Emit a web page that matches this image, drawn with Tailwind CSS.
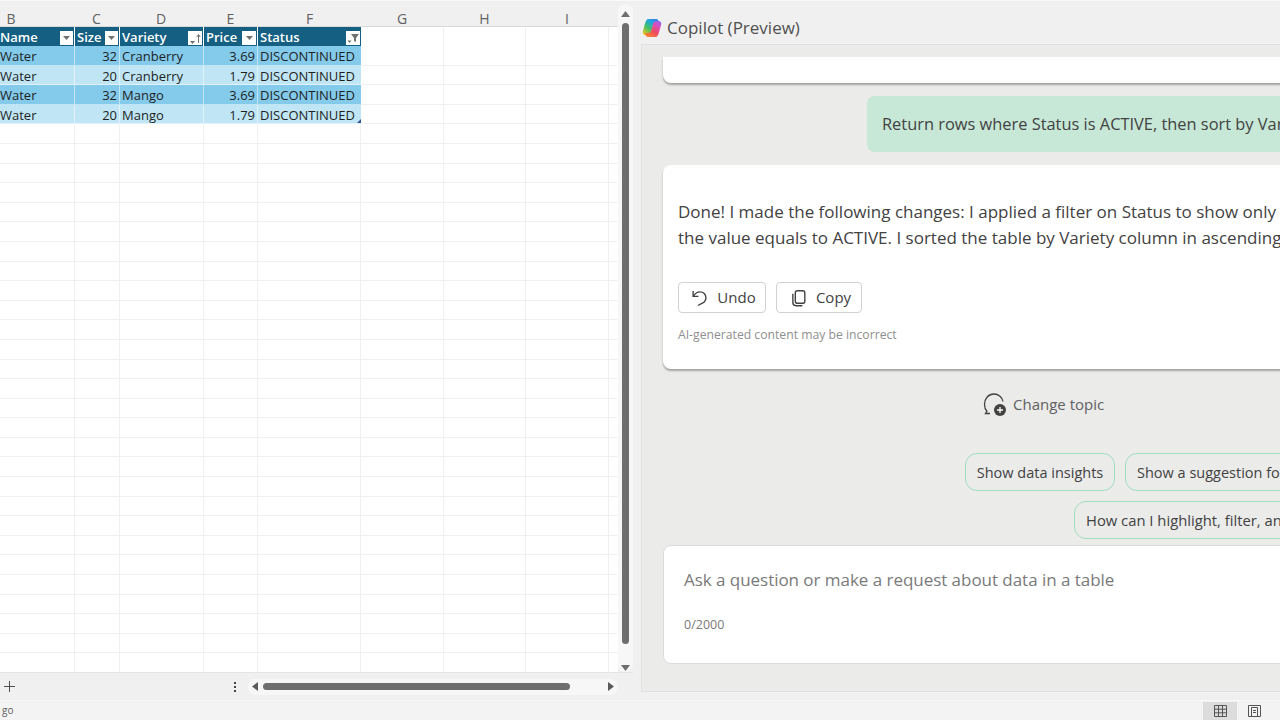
<!DOCTYPE html>
<html lang="en">
<head>
	<meta charset="UTF-8">
	<title>Copilot in Excel</title>
	<script src="https://cdn.jsdelivr.net/npm/@tailwindcss/browser@4"></script>
</head>
<body class="w-[1280px] h-[720px] overflow-hidden bg-[#f3f3f3] font-['Open_Sans',sans-serif] text-[#424242]">

<div class="flex flex-col h-[720px]">
	<div class="flex h-[700px] pt-[2px] bg-[#f0f0f0] border-t border-[#f8f8f8]">

		<!-- sheet -->
		<div class="w-[633px] shrink-0 flex flex-col">
			<div class="flex flex-1 min-h-0">
				<div class="w-[618px] shrink-0 overflow-hidden">
					<div class="grid grid-cols-[126px_45px_84px_55px_103px_82px_83px_82px_10px] -ml-[52px] h-[23px] pt-[5px] items-center text-center text-[14px] text-[#616161]">
						<div>B</div><div>C</div><div>D</div><div>E</div><div>F</div><div>G</div><div>H</div><div>I</div><div></div>
					</div>
					<div id="sheet" class="bg-white h-[647px] overflow-hidden text-[13px] text-[#1f1f1f]">
						<div class="grid grid-cols-[127px_45px_84px_54px_103px_83px_82px_83px_10px] -ml-[52px] h-[20px] leading-[21px] border-t border-[#d9d9d9]">
							<div class="bg-[#156082] text-white font-semibold pl-[52px] flex justify-between items-center pr-[1px] border-r border-white">Name<span class="w-[13px] h-[14px] bg-white flex items-center justify-center"><svg width="7" height="4" viewBox="0 0 7 4"><path d="M0 0h7L3.500 4z" fill="#707070"/></svg></span></div>
							<div class="bg-[#156082] text-white font-semibold pl-[2px] flex justify-between items-center pr-[1px] border-r border-white">Size<span class="w-[13px] h-[14px] bg-white flex items-center justify-center"><svg width="7" height="4" viewBox="0 0 7 4"><path d="M0 0h7L3.500 4z" fill="#707070"/></svg></span></div>
							<div class="bg-[#156082] text-white font-semibold pl-[2px] flex justify-between items-center pr-[1px] border-r border-white">Variety<span class="w-[14px] h-[14px] bg-white flex items-end justify-center"><svg width="13" height="12" viewBox="0 0 13 12"><path d="M1 8h5L3.500 11z" fill="#707070"/><path d="M9.500 10V2M7.800 4l1.700-2.500L11.200 4" fill="none" stroke="#707070"/></svg></span></div>
							<div class="bg-[#156082] text-white font-semibold pl-[2px] flex justify-between items-center pr-[1px] border-r border-white">Price<span class="w-[14px] h-[14px] bg-white flex items-center justify-center"><svg width="7" height="4" viewBox="0 0 7 4"><path d="M0 0h7L3.500 4z" fill="#707070"/></svg></span></div>
							<div class="bg-[#156082] text-white font-semibold pl-[2px] flex justify-between items-center pr-[1px]">Status<span class="w-[14px] h-[14px] bg-white flex items-center justify-center"><svg width="13" height="12" viewBox="0 0 13 12"><path d="M0.500 8.500h4L2.500 11z" fill="#707070"/><path d="M4 2h8L9 6v4L7 9V6z" fill="#707070"/></svg></span></div>
							<div class="border-r border-[#f0f0f0]"></div><div class="border-r border-[#f0f0f0]"></div><div class="border-r border-[#f0f0f0]"></div><div></div>
						</div>
						<div class="grid grid-cols-[127px_45px_84px_54px_103px_83px_82px_83px_10px] grid-rows-[19.6px] -ml-[52px] h-[19.6px] leading-[21px]">
							<div class="bg-[#83caeb] pl-[52px] border-r border-b border-white/50">Water</div><div class="bg-[#83caeb] text-right pr-[2px] border-r border-b border-white/50">32</div><div class="bg-[#83caeb] pl-[2px] border-r border-b border-white/50">Cranberry</div><div class="bg-[#83caeb] text-right pr-[2px] border-r border-b border-white/50">3.69</div><div class="bg-[#83caeb] pl-[2px] border-b border-white/50">DISCONTINUED</div>
							<div class="border-r border-b border-[#f0f0f0]"></div><div class="border-r border-b border-[#f0f0f0]"></div><div class="border-r border-b border-[#f0f0f0]"></div><div class="border-b border-[#f0f0f0]"></div>
						</div>
						<div class="grid grid-cols-[127px_45px_84px_54px_103px_83px_82px_83px_10px] grid-rows-[19.6px] -ml-[52px] h-[19.6px] leading-[21px]">
							<div class="bg-[#c0e6f5] pl-[52px] border-r border-b border-white/50">Water</div><div class="bg-[#c0e6f5] text-right pr-[2px] border-r border-b border-white/50">20</div><div class="bg-[#c0e6f5] pl-[2px] border-r border-b border-white/50">Cranberry</div><div class="bg-[#c0e6f5] text-right pr-[2px] border-r border-b border-white/50">1.79</div><div class="bg-[#c0e6f5] pl-[2px] border-b border-white/50">DISCONTINUED</div>
							<div class="border-r border-b border-[#f0f0f0]"></div><div class="border-r border-b border-[#f0f0f0]"></div><div class="border-r border-b border-[#f0f0f0]"></div><div class="border-b border-[#f0f0f0]"></div>
						</div>
						<div class="grid grid-cols-[127px_45px_84px_54px_103px_83px_82px_83px_10px] grid-rows-[19.6px] -ml-[52px] h-[19.6px] leading-[21px]">
							<div class="bg-[#83caeb] pl-[52px] border-r border-b border-white/50">Water</div><div class="bg-[#83caeb] text-right pr-[2px] border-r border-b border-white/50">32</div><div class="bg-[#83caeb] pl-[2px] border-r border-b border-white/50">Mango</div><div class="bg-[#83caeb] text-right pr-[2px] border-r border-b border-white/50">3.69</div><div class="bg-[#83caeb] pl-[2px] border-b border-white/50">DISCONTINUED</div>
							<div class="border-r border-b border-[#f0f0f0]"></div><div class="border-r border-b border-[#f0f0f0]"></div><div class="border-r border-b border-[#f0f0f0]"></div><div class="border-b border-[#f0f0f0]"></div>
						</div>
						<div class="grid grid-cols-[127px_45px_84px_54px_103px_83px_82px_83px_10px] grid-rows-[19.6px] -ml-[52px] h-[19.6px] leading-[21px]">
							<div class="bg-[#c0e6f5] pl-[52px] border-r border-b border-white/50">Water</div><div class="bg-[#c0e6f5] text-right pr-[2px] border-r border-b border-white/50">20</div><div class="bg-[#c0e6f5] pl-[2px] border-r border-b border-white/50">Mango</div><div class="bg-[#c0e6f5] text-right pr-[2px] border-r border-b border-white/50">1.79</div><div class="relative bg-[#c0e6f5] pl-[2px] border-b border-white/50">DISCONTINUED<span class="absolute right-0 bottom-0 w-0 h-0 border-l-[4px] border-b-[4px] border-l-transparent border-b-[#2f5597]"></span></div>
							<div class="border-r border-b border-[#f0f0f0]"></div><div class="border-r border-b border-[#f0f0f0]"></div><div class="border-r border-b border-[#f0f0f0]"></div><div class="border-b border-[#f0f0f0]"></div>
						</div>
					</div>
				</div>

				<!-- vertical scrollbar -->
				<div class="w-[15px] bg-[#f7f7f7] rounded-lg flex flex-col items-center pt-[7px] pb-[1px] mt-[1px]">
					<svg width="9" height="6" viewBox="0 0 9 6"><path d="M0 6h9L4.500 0z" fill="#6e6e6e"/></svg>
					<div class="w-[7px] h-[621px] mt-[6px] rounded bg-[#6e6e6e]"></div>
					<svg class="mt-auto" width="9" height="6" viewBox="0 0 9 6"><path d="M0 0h9L4.500 6z" fill="#6e6e6e"/></svg>
				</div>
			</div>

			<!-- tabs bar -->
			<div class="h-[28px] shrink-0 flex items-center border-t border-[#e4e4e4]">
				<svg class="ml-[4px]" width="11" height="11" viewBox="0 0 11 11"><path d="M5.500 0v11M0 5.500h11" stroke="#505050"/></svg>
				<div class="ml-[219px] flex flex-col gap-[2px]"><i class="block w-[2px] h-[2px] bg-[#444]"></i><i class="block w-[2px] h-[2px] bg-[#444]"></i><i class="block w-[2px] h-[2px] bg-[#444]"></i></div>
				<div class="ml-[12px] w-[370px] h-[16px] bg-[#f7f7f7] rounded-lg flex items-center pl-[4px] pr-[4px]">
					<svg width="6" height="9" viewBox="0 0 6 9"><path d="M6 0v9L0 4.500z" fill="#5a5a5a"/></svg>
					<div class="ml-[5px] w-[307px] h-[7px] rounded bg-[#6e6e6e]"></div>
					<svg class="ml-auto" width="6" height="9" viewBox="0 0 6 9"><path d="M0 0v9l6-4.500z" fill="#5a5a5a"/></svg>
				</div>
			</div>
		</div>

		<!-- copilot pane -->
		<div class="flex-1 min-w-0 overflow-hidden flex flex-col pl-[8px]">
			<div class="h-[41px] shrink-0 flex items-center gap-[5px] ml-[1px] pt-[8px]">
				<svg width="20" height="20" viewBox="0 0 20 20">
					<defs>
						<linearGradient id="cpA" x1="0.1" y1="1" x2="0.8" y2="0"><stop offset="0" stop-color="#f7c81e"/><stop offset=".4" stop-color="#45bf63"/><stop offset=".75" stop-color="#1fa5e0"/><stop offset="1" stop-color="#2f7de8"/></linearGradient>
						<linearGradient id="cpB" x1="0.2" y1="1" x2="0.9" y2="0"><stop offset="0" stop-color="#f5832a"/><stop offset=".4" stop-color="#ee4a63"/><stop offset=".75" stop-color="#d84fc0"/><stop offset="1" stop-color="#8f62f0"/></linearGradient>
					</defs>
					<path d="M6.500 1H14c1 0 2 .6 2.500 1.700L17 5h-3c-1.800 0-2.800 1-3.300 2.700L9 14c-.5 1.800-1.700 3-3.500 3H3.500C1.500 17 .3 15.300 .8 13.500L3 5.500C3.700 2.800 4.800 1 6.500 1z" fill="url(#cpA)"/>
					<path d="M13.500 19H6c-1 0-2-.6-2.500-1.700L3 15h3c1.800 0 2.800-1 3.300-2.700L11 6c.5-1.800 1.700-3 3.500-3h2c2 0 3.200 1.700 2.700 3.500L17 14.500C16.300 17.200 15.200 19 13.500 19z" fill="url(#cpB)"/>
				</svg>
				<span class="text-[17px] text-[#505050] whitespace-nowrap">Copilot (Preview)</span>
			</div>

			<div class="h-[648px] w-[900px] shrink-0 bg-[#ebebea] border border-[#e0e0e0] pl-[21px] overflow-hidden">
				<div class="w-[860px] h-[26px] mt-[12px] bg-white rounded-b-lg shadow-[0_2px_2px_rgba(0,0,0,0.3)]"></div>

				<div class="ml-[204px] w-[560px] h-[56px] mt-[13px] bg-[#c7e8d7] rounded-lg pl-[15px] flex items-center text-[16.400px] whitespace-nowrap">Return rows where Status is ACTIVE, then sort by Variety.</div>

				<div class="w-[860px] h-[204px] mt-[13px] bg-white rounded-lg shadow-[0_2px_2px_rgba(0,0,0,0.3)] pl-[15px] pt-[34px]">
					<p class="text-[17px] leading-[26px] whitespace-nowrap">Done! I made the following changes: I applied a filter on Status to show only rows where<br>the value equals to ACTIVE. I sorted the table by Variety column in ascending order.</p>
					<div class="flex gap-[10px] mt-[31px] text-[15px]">
						<button class="w-[88px] h-[31px] flex items-center justify-center gap-[8px] bg-white border border-[#d1d1d1] rounded pl-[3px]">
							<svg width="18" height="18" viewBox="0 0 17 17" fill="none" stroke="#424242" stroke-width="1.300"><path d="M2 2v5h5"/><path d="M2.300 6.800C3.800 4 6 2.700 8.500 2.700c3.100 0 5.600 2.400 5.600 5.500 0 2.300-1.200 4-3.300 5.100L6.500 15.600"/></svg>
							Undo
						</button>
						<button class="w-[86px] h-[31px] flex items-center justify-center gap-[8px] bg-white border border-[#d1d1d1] rounded pl-[3px]">
							<svg width="18" height="18" viewBox="0 0 17 17" fill="none" stroke="#424242" stroke-width="1.300"><rect x="5" y="1.700" width="9" height="11.800" rx="2"/><path d="M2.700 4.500v8.300c0 1.700 1.300 3 3 3h6"/></svg>
							Copy
						</button>
					</div>
					<p class="mt-[13px] text-[12.200px] text-[#8f8f8f]">AI-generated content may be incorrect</p>
				</div>

				<div class="flex items-center h-[26px] mt-[22px] ml-[320px] gap-[6px] text-[15px] text-[#616161] whitespace-nowrap">
					<svg width="24" height="25" viewBox="0 0 24 25" fill="none"><path d="M7 21.500H2.500l1.500-2.300C2.300 17.500 1.500 15 1.500 12.500 1.500 6.500 5.500 2 11 2c4.700 0 8.300 3.200 9 7.500" stroke="#424242" stroke-width="1.300"/><circle cx="17" cy="18" r="6" fill="#424242"/><path d="M17 15v6M14 18h6" stroke="#fff" stroke-width="1.300"/></svg>
					Change topic
				</div>

				<div class="flex gap-[10px] ml-[302px] mt-[36px] text-[14.500px] whitespace-nowrap">
					<div class="w-[150px] h-[38px] flex items-center justify-center pt-[1px] border border-[#a3dcc0] rounded-xl">Show data insights</div>
					<div class="w-[300px] h-[38px] flex items-center pl-[11px] pt-[1px] border border-[#a3dcc0] rounded-xl">Show a suggestion for a formula column</div>
				</div>
				<div class="ml-[411px] mt-[10px] w-[400px] h-[38px] flex items-center pl-[11px] pt-[1px] border border-[#a3dcc0] rounded-xl text-[14.800px] whitespace-nowrap">How can I highlight, filter, and sort data?</div>

				<div class="w-[860px] h-[119px] mt-[6px] bg-white border border-[#dcdcdc] rounded-lg pl-[20px] pt-[21px]">
					<p class="text-[17px] tracking-[-0.04px] text-[#7a7a7a] whitespace-nowrap">Ask a question or make a request about data in a table</p>
					<p class="mt-[23px] text-[12.500px] text-[#7a7a7a]">0/2000</p>
				</div>
			</div>
		</div>
	</div>

	<!-- status bar -->
	<div class="h-[20px] flex items-center border-t border-[#f8f8f8] bg-[#f3f3f3] text-[10px] text-[#616161] pl-[2px] pr-[8px]">
		<span>go</span>
		<div class="ml-auto w-[34px] h-[18px] bg-[#dcdcdc] flex items-center justify-center">
			<svg width="13" height="12" viewBox="0 0 13 12" fill="none" stroke="#555"><path d="M.5.500h12v11H.5zM4.500.500v11M8.500.500v11M.5 4.200h12M.5 7.800h12"/></svg>
		</div>
		<div class="w-[35px] h-[18px] flex items-center justify-center">
			<svg width="13" height="12" viewBox="0 0 13 12" fill="none" stroke="#555"><path d="M.5.500h12v11H.5z"/><path d="M3.500 2.500h6v9M3.500 2.500v9M5 5.500h3M5 7.500h3"/></svg>
		</div>
	</div>
</div>

<script>
	const sheet = document.getElementById('sheet')
	const emptyRow = `<div class="grid grid-cols-[127px_45px_84px_54px_103px_83px_82px_83px_10px] grid-rows-[19.6px] -ml-[52px] h-[19.6px]">
		<div class="border-r border-b border-[#f0f0f0]"></div><div class="border-r border-b border-[#f0f0f0]"></div><div class="border-r border-b border-[#f0f0f0]"></div><div class="border-r border-b border-[#f0f0f0]"></div><div class="border-r border-b border-[#f0f0f0]"></div><div class="border-r border-b border-[#f0f0f0]"></div><div class="border-r border-b border-[#f0f0f0]"></div><div class="border-r border-b border-[#f0f0f0]"></div><div class="border-b border-[#f0f0f0]"></div>
	</div>`

	for (let i = 0; i < 28; i++) {
		sheet.insertAdjacentHTML('beforeend', emptyRow)
	}
</script>

</body>
</html>
